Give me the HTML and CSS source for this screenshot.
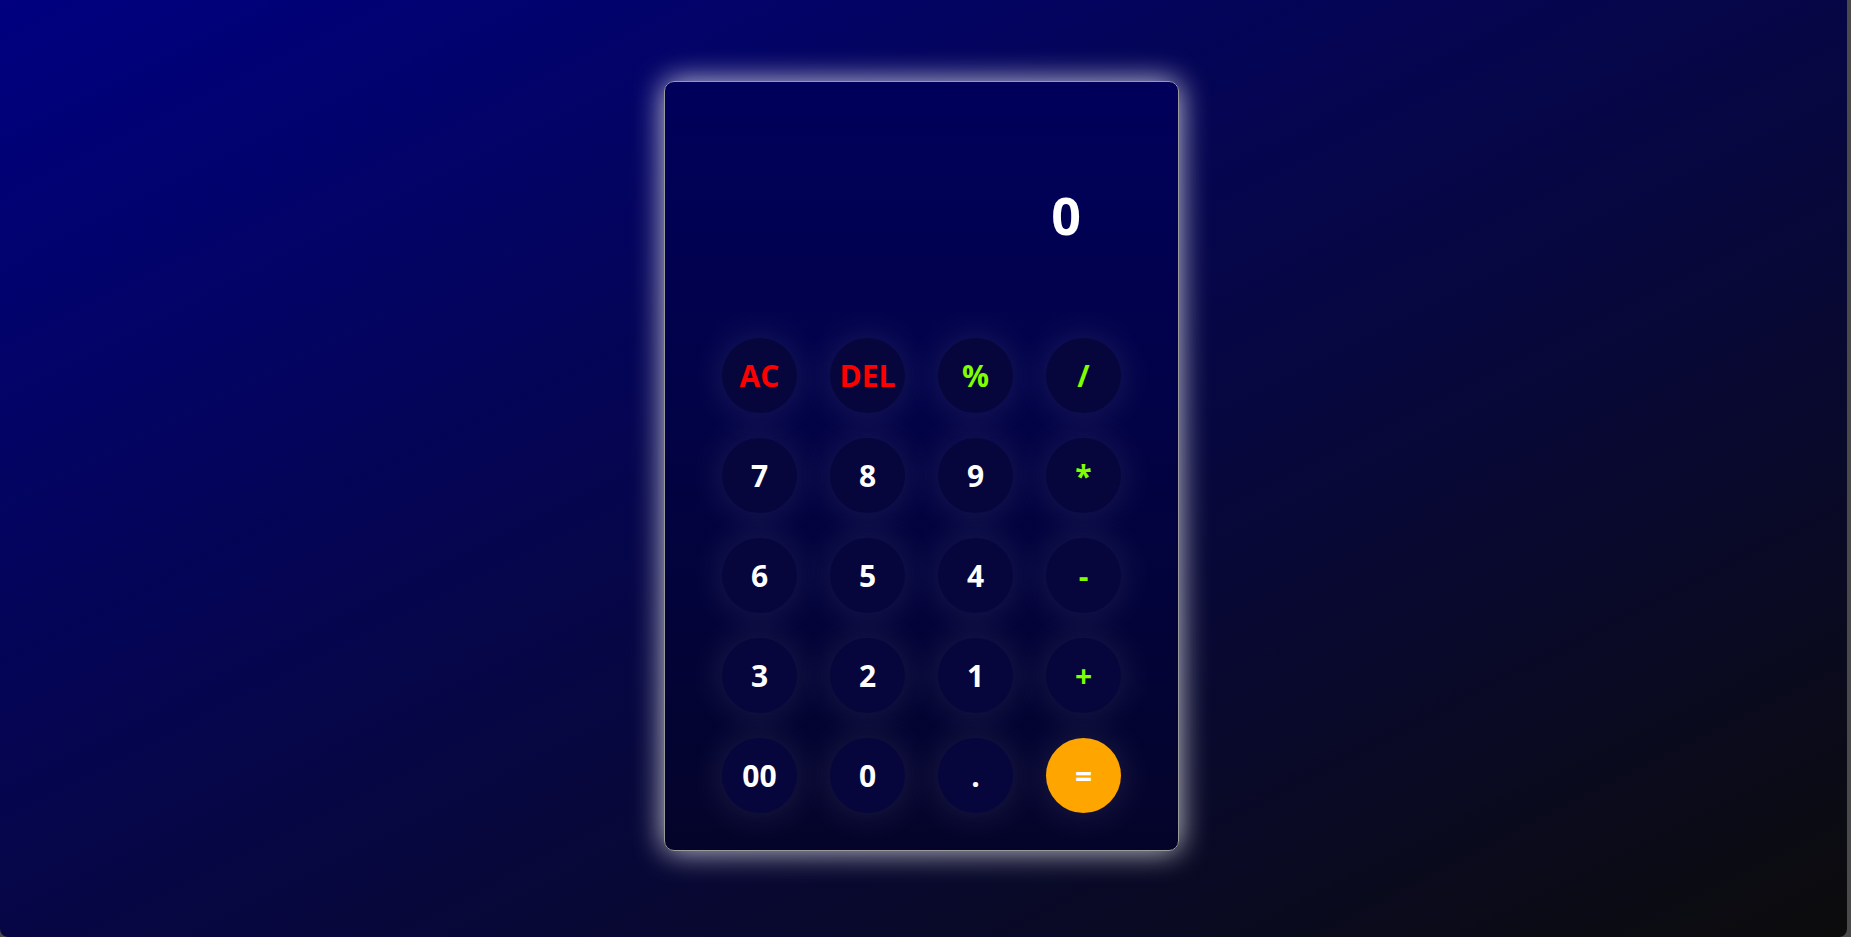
FILE: index.html
```html
<!DOCTYPE html>
<html lang="en">
<head>
<meta charset="utf-8">
<title>Calculator</title>
<link rel="stylesheet" href="styles.css">
</head>
<body>
<main class="page">
  <div class="calculator">
    <div class="display">0</div>
    <div class="keys">
      <button class="key key-clear">AC</button>
      <button class="key key-clear">DEL</button>
      <button class="key key-op">%</button>
      <button class="key key-op">/</button>
      <button class="key">7</button>
      <button class="key">8</button>
      <button class="key">9</button>
      <button class="key key-op">*</button>
      <button class="key">6</button>
      <button class="key">5</button>
      <button class="key">4</button>
      <button class="key key-op">-</button>
      <button class="key">3</button>
      <button class="key">2</button>
      <button class="key">1</button>
      <button class="key key-op">+</button>
      <button class="key">00</button>
      <button class="key">0</button>
      <button class="key">.</button>
      <button class="key key-equal">=</button>
    </div>
  </div>
</main>
</body>
</html>
```

FILE: styles.css
```css
html, body {
  margin: 0;
  padding: 0;
  height: 100%;
}

html {
  background: #4a4a4a;
}

body {
  font-family: "Open Sans", "Liberation Sans", sans-serif;
}

.page {
  width: 1847px;
  height: 937px;
  box-sizing: border-box;
  background: linear-gradient(to bottom right, #000080, #0c0c0c);
  border-radius: 0 0 8px 8px;
  display: flex;
  justify-content: center;
  align-items: flex-start;
  padding: 81px 4px 0 0;
}

.calculator {
  width: 515px;
  height: 770px;
  box-sizing: border-box;
  border: 1.5px solid #9a9a9a;
  border-radius: 10px;
  background: linear-gradient(to bottom, #00005c, #04042a);
  box-shadow: 0 0 30px rgba(255, 255, 255, 0.8);
  padding: 0 56px 0 57px;
}

.display {
  height: 256px;
  box-sizing: border-box;
  padding: 97px 41px 0 0;
  text-align: right;
  color: #ffffff;
  font-size: 52px;
  font-weight: 700;
  line-height: normal;
}

.keys {
  display: grid;
  grid-template-columns: repeat(4, 75px);
  grid-auto-rows: 75px;
  column-gap: 33px;
  row-gap: 25px;
}

.key {
  width: 75px;
  height: 75px;
  border: none;
  border-radius: 50%;
  background: #06063c;
  box-shadow: 0 0 40px rgba(255, 255, 255, 0.12);
  color: #ffffff;
  font-family: "Open Sans", "Liberation Sans", sans-serif;
  font-size: 30px;
  font-weight: 700;
  padding: 0;
  display: flex;
  align-items: center;
  justify-content: center;
}

.key-clear {
  color: #ff0000;
}

.key-op {
  color: #7fff00;
}

.key-equal {
  background: #ffa500;
  color: #ffffff;
}
```
